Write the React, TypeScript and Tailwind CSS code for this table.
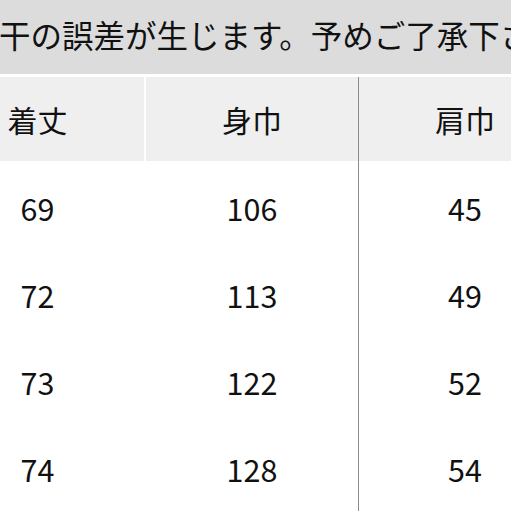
import React from "react";

const rows = [
  { length: 69, width: 106, shoulder: 45 },
  { length: 72, width: 113, shoulder: 49 },
  { length: 73, width: 122, shoulder: 52 },
  { length: 74, width: 128, shoulder: 54 },
];

const font = {
  fontFamily: '"Noto Sans CJK JP", "Noto Sans", sans-serif',
};

export default function App() {
  return (
    <div
      className="w-[511px] h-[511px] overflow-hidden bg-white text-[#111]"
      style={font}
    >
      <div className="h-[74px] bg-[#dcdcdc] flex items-center pb-[5px] whitespace-nowrap overflow-hidden">
        <span className="ml-[-1px] text-[31.5px] leading-none">
          干の誤差が生じます。予めご了承下さい。
        </span>
      </div>
      <div className="h-[3px] bg-white" />
      <div className="ml-[-69px] w-[640px]">
        <div className="grid grid-cols-[213px_2px_212px_1px_212px] h-[84px] bg-[#efefef] text-[30px] leading-none">
          <div className="flex items-center justify-center">着丈</div>
          <div className="bg-white" />
          <div className="flex items-center justify-center">身巾</div>
          <div className="bg-[#8c8c8c]" />
          <div className="flex items-center justify-center">肩巾</div>
        </div>
        <div className="grid grid-cols-[213px_2px_212px_1px_212px] pt-[4px] text-[30.5px] leading-none">
          <div>
            {rows.map((r) => (
              <div key={r.length} className="h-[87px] flex items-center justify-center">
                {r.length}
              </div>
            ))}
          </div>
          <div />
          <div>
            {rows.map((r) => (
              <div key={r.width} className="h-[87px] flex items-center justify-center">
                {r.width}
              </div>
            ))}
          </div>
          <div className="bg-[#8c8c8c] mt-[-4px]" />
          <div>
            {rows.map((r) => (
              <div key={r.shoulder} className="h-[87px] flex items-center justify-center">
                {r.shoulder}
              </div>
            ))}
          </div>
        </div>
      </div>
    </div>
  );
}
